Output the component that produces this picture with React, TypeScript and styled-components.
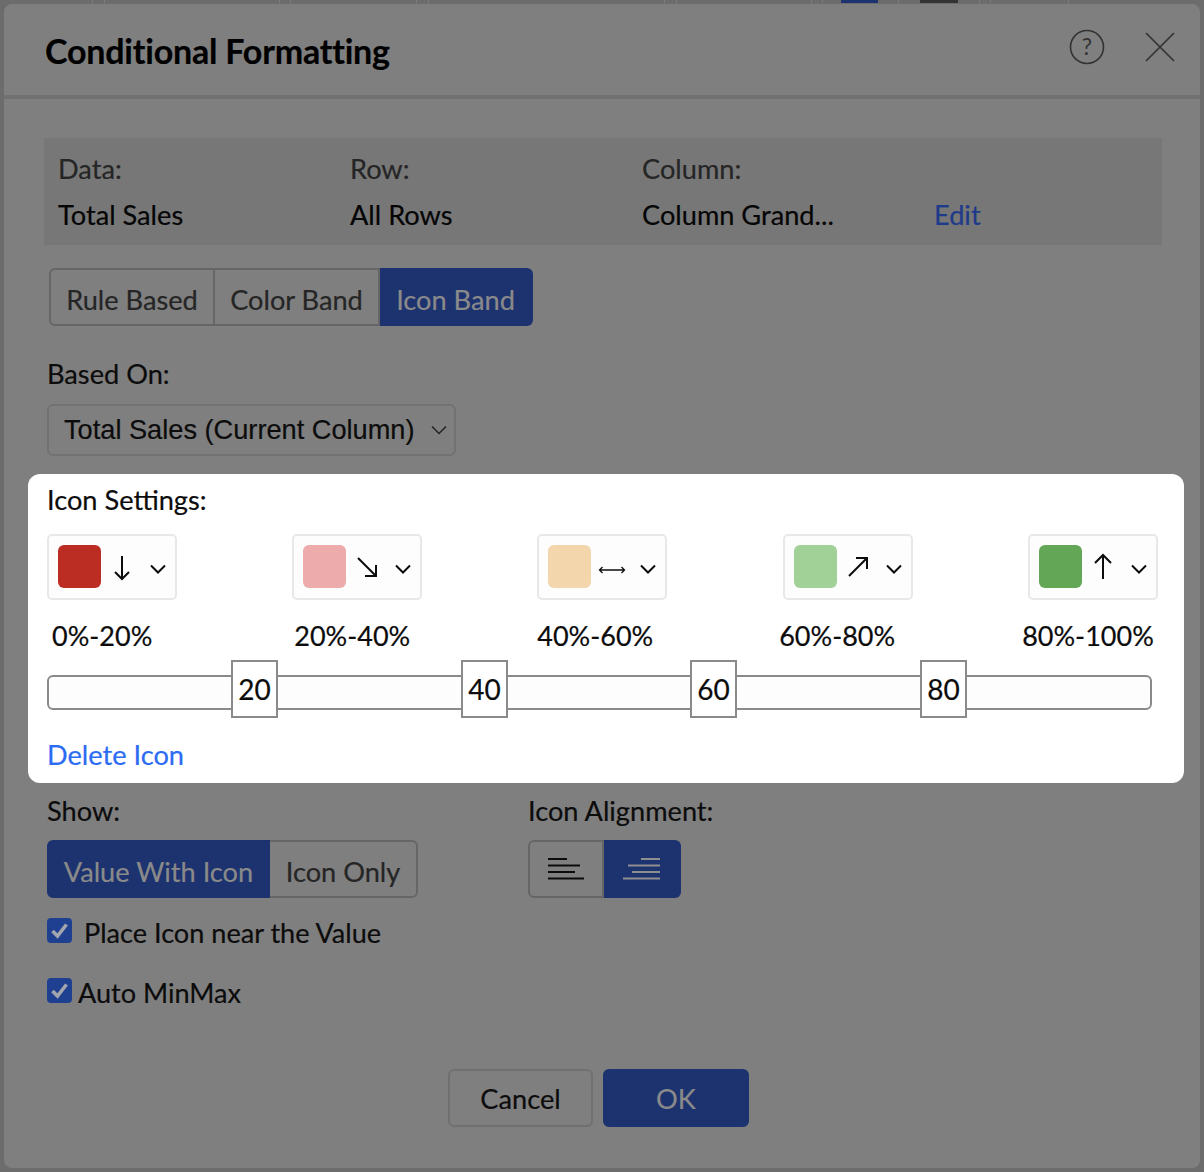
import styled, { createGlobalStyle } from 'styled-components'

const GlobalStyle = createGlobalStyle`
  html, body {
    margin: 0;
    padding: 0;
    background: #6c6c6c;
  }
  * {
    box-sizing: border-box;
  }
`

const BLUE = '#1d3370'
const LINE = '#666666'

const Page = styled.div`
  font-family: Lato, 'Liberation Sans', sans-serif;
  height: 1172px;
  overflow: hidden;
  position: relative;
  -webkit-text-stroke: 0.2px;
  width: 1204px;
`

const BackStrip = styled.div`
  background: #6c6c6c;
  display: flex;
  height: 4px;
`

const BackMark = styled.div<{ $x: number; $w: number; $color: string }>`
  background: ${p => p.$color};
  height: 3px;
  margin-left: ${p => p.$x}px;
  width: ${p => p.$w}px;
`

const Dialog = styled.div`
  background: #7f7f7f;
  border-radius: 8px;
  height: 1164px;
  margin: 0 4px;
`

const Header = styled.header`
  align-items: center;
  border-bottom: 4px solid #717171;
  display: flex;
  height: 95px;
  padding: 0 25px 0 41px;
`

const Title = styled.h1`
  color: #000;
  flex-grow: 1;
  font-size: 34px;
  font-weight: 700;
  letter-spacing: -0.2px;
  margin: 1px 0 0;
`

const HelpIcon = styled.svg`
  display: block;
  margin-top: -6px;
`

const CloseIcon = styled.svg`
  display: block;
  margin: -6px 0 0 40px;
`

const InfoPanel = styled.section`
  background: #777777;
  display: grid;
  grid-template-columns: repeat(4, 292px);
  grid-template-rows: 46px 46px;
  height: 107px;
  margin: 39px 38px 0 40px;
  padding: 7px 0 0 14px;
`

const InfoLabel = styled.div`
  align-items: center;
  color: #252525;
  display: flex;
  font-size: 27.2px;
`

const InfoValue = styled(InfoLabel)`
  color: #050505;
`

const EditLink = styled(InfoLabel)`
  color: #1e3a8a;
`

const Segments = styled.div<{ $left: number; $top: number }>`
  display: inline-flex;
  height: 58px;
  margin: ${p => p.$top}px 0 0 ${p => p.$left}px;
`

const Segment = styled.div<{ $active?: boolean; $width: number; $pos: 'first' | 'mid' | 'last' }>`
  align-items: center;
  background: ${p => (p.$active ? BLUE : 'transparent')};
  border: 2px solid ${p => (p.$active ? BLUE : LINE)};
  border-left-width: ${p => (p.$pos === 'first' ? 2 : 0)}px;
  border-radius: ${p => (p.$pos === 'first' ? '6px 0 0 6px' : p.$pos === 'last' ? '0 6px 6px 0' : '0')};
  color: ${p => (p.$active ? '#8a8a8a' : '#252525')};
  display: flex;
  font-size: 27.2px;
  justify-content: center;
  padding-top: 4px;
  width: ${p => p.$width}px;

  & + & {
    border-left: ${p => (p.$active ? 'none' : `2px solid ${LINE}`)};
  }
`

const IconSegment = styled(Segment)`
  padding-top: 0;
`

const FieldLabel = styled.div`
  color: #0c0c0c;
  font-size: 27.2px;
  line-height: 32px;
`

const BasedOn = styled.section`
  margin: 32px 0 0 43px;
`

const SelectBox = styled.div`
  align-items: center;
  border: 2px solid #727272;
  border-radius: 6px;
  color: #0c0c0c;
  display: flex;
  font-family: 'Liberation Sans', Arial, sans-serif;
  font-size: 27.2px;
  height: 52px;
  justify-content: space-between;
  margin-top: 14px;
  padding: 0 7px 0 15px;
  white-space: nowrap;
  width: 409px;
`

const Highlight = styled.section`
  background: #ffffff;
  border-radius: 12px;
  height: 309px;
  margin: 18px 0 0 24px;
  padding: 10px 27px 0 19px;
  width: 1156px;
`

const CardRow = styled.div`
  display: flex;
  gap: 115.2px;
  margin-top: 18px;
`

const Card = styled.div`
  align-items: center;
  background: #fdfdfd;
  border: 2px solid #e8e8e8;
  border-radius: 5px;
  display: flex;
  flex-shrink: 0;
  height: 66px;
  padding: 0 9px;
  width: 130px;
`

const Swatch = styled.div<{ $color: string }>`
  background: ${p => p.$color};
  border-radius: 6px;
  height: 43px;
  margin-top: -2px;
  width: 43px;
`

const ArrowIcon = styled.svg`
  display: block;
  margin-left: 7px;
`

const Chevron = styled.svg`
  display: block;
  margin: 3px 0 0 auto;
`

const RangeRow = styled.div`
  display: flex;
  margin-top: 20px;
  padding-left: 5px;
`

const RangeLabel = styled.div<{ $after: number }>`
  color: #0c0c0c;
  font-size: 27px;
  line-height: 32px;
  margin-right: ${p => p.$after}px;
`

const Track = styled.div`
  background: #fdfdfd;
  border: 2px solid #8a8a8a;
  border-radius: 6px;
  height: 35px;
  margin-top: 23px;
  position: relative;
  width: 1105px;
`

const Handle = styled.div<{ $at: number }>`
  align-items: center;
  background: #fff;
  border: 2px solid #8a8a8a;
  color: #0c0c0c;
  display: flex;
  font-size: 28px;
  height: 58px;
  justify-content: center;
  left: ${p => p.$at}px;
  position: absolute;
  top: -17px;
  width: 47px;
`

const DeleteLink = styled.div`
  color: #2b6cf3;
  font-size: 27.2px;
  line-height: 32px;
  margin-top: 29px;
`

const Lower = styled.section`
  display: grid;
  grid-template-columns: 481px 1fr;
  margin: 12px 0 0 43px;
`

const OptionRow = styled.div<{ $top: number; $gap: number }>`
  align-items: flex-start;
  color: #0c0c0c;
  display: flex;
  font-size: 27.1px;
  gap: ${p => p.$gap}px;
  line-height: 32px;
  margin-top: ${p => p.$top}px;
`

const CheckBox = styled.div`
  align-items: center;
  background: #1f4090;
  border-radius: 4px;
  display: flex;
  flex-shrink: 0;
  height: 25px;
  justify-content: center;
  margin-top: 1px;
  width: 25px;
`

const AlignIcon = styled.svg`
  display: block;
`

const Footer = styled.footer`
  display: flex;
  gap: 10px;
  margin-top: 60px;
  padding-left: 444px;
`

const FooterButton = styled.div<{ $primary?: boolean }>`
  align-items: center;
  background: ${p => (p.$primary ? BLUE : 'transparent')};
  border: 2px solid ${p => (p.$primary ? BLUE : '#707070')};
  border-radius: 6px;
  color: ${p => (p.$primary ? '#8a8a8a' : '#0c0c0c')};
  display: flex;
  font-size: 27.2px;
  height: 58px;
  justify-content: center;
  width: ${p => (p.$primary ? 146 : 145)}px;
`

const TICK = '#7b7b80'

const MARKS = [
  { x: 92, w: 1, color: TICK },
  { x: 11, w: 1, color: TICK },
  { x: 174, w: 1, color: TICK },
  { x: 10, w: 1, color: TICK },
  { x: 125, w: 1, color: TICK },
  { x: 11, w: 1, color: TICK },
  { x: 235, w: 1, color: TICK },
  { x: 11, w: 1, color: TICK },
  { x: 134, w: 1, color: TICK },
  { x: 10, w: 1, color: TICK },
  { x: 18, w: 37, color: '#1d3370' },
  { x: 20, w: 1, color: TICK },
  { x: 21, w: 38, color: '#333333' },
  { x: 21, w: 1, color: TICK },
  { x: 10, w: 1, color: TICK },
  { x: 77, w: 1, color: TICK },
]

const ARROWS = {
  down: <path d="M14 3V26M7 19L14 26L21 19" strokeWidth="2" />,
  se: <path d="M5 5L23 23M23 12V23H12" strokeWidth="2" />,
  both: <path d="M1.5 17H26.5M4.5 14L1.5 17L4.5 20M23.5 14L26.5 17L23.5 20" strokeWidth="1.3" />,
  ne: <path d="M5 23L23 5M12 5H23V16" strokeWidth="2" />,
  up: <path d="M14 26V2M6 10L14 2L22 10" strokeWidth="2" />,
}

const BANDS = [
  { color: '#bb2d22', arrow: ARROWS.down },
  { color: '#edabab', arrow: ARROWS.se },
  { color: '#f3d6ac', arrow: ARROWS.both },
  { color: '#a2d198', arrow: ARROWS.ne },
  { color: '#63a656', arrow: ARROWS.up },
]

const RANGES = [
  { text: '0%-20%', after: 142 },
  { text: '20%-40%', after: 127 },
  { text: '40%-60%', after: 126 },
  { text: '60%-80%', after: 127 },
  { text: '80%-100%', after: 0 },
]

const HANDLES = [
  { value: 20, at: 182 },
  { value: 40, at: 412 },
  { value: 60, at: 641 },
  { value: 80, at: 871 },
]

function Check() {
  return (
    <svg width="19" height="17" viewBox="0 0 19 17" fill="none">
      <path d="M2.5 9L7.5 14L16.5 2.5" stroke="#a2a5ad" strokeWidth="3.6" />
    </svg>
  )
}

export default function App() {
  return (
    <Page>
      <GlobalStyle />
      <BackStrip>
        {MARKS.map((m, i) => (
          <BackMark key={i} $x={m.x} $w={m.w} $color={m.color} />
        ))}
      </BackStrip>
      <Dialog>
        <Header>
          <Title>Conditional Formatting</Title>
          <HelpIcon width="36" height="36" viewBox="0 0 36 36" fill="none">
            <circle cx="18" cy="18" r="16.5" stroke="#333" strokeWidth="1.6" />
            <text x="18" y="26" textAnchor="middle" fontFamily="Lato, sans-serif" fontSize="23" fill="#333">
              ?
            </text>
          </HelpIcon>
          <CloseIcon width="30" height="30" viewBox="0 0 30 30" fill="none">
            <path d="M1 1L29 29M29 1L1 29" stroke="#333" strokeWidth="1.7" />
          </CloseIcon>
        </Header>

        <InfoPanel>
          <InfoLabel>Data:</InfoLabel>
          <InfoLabel>Row:</InfoLabel>
          <InfoLabel>Column:</InfoLabel>
          <span />
          <InfoValue>Total Sales</InfoValue>
          <InfoValue>All Rows</InfoValue>
          <InfoValue>Column Grand...</InfoValue>
          <EditLink>Edit</EditLink>
        </InfoPanel>

        <Segments $left={45} $top={23}>
          <Segment $pos="first" $width={166}>
            Rule Based
          </Segment>
          <Segment $pos="mid" $width={165}>
            Color Band
          </Segment>
          <Segment $pos="last" $width={153} $active>
            Icon Band
          </Segment>
        </Segments>

        <BasedOn>
          <FieldLabel>Based On:</FieldLabel>
          <SelectBox>
            Total Sales (Current Column)
            <svg width="16" height="10" viewBox="0 0 16 10" fill="none">
              <path d="M1 1.5L8 8.5L15 1.5" stroke="#222" strokeWidth="1.5" />
            </svg>
          </SelectBox>
        </BasedOn>

        <Highlight>
          <FieldLabel>Icon Settings:</FieldLabel>
          <CardRow>
            {BANDS.map((b, i) => (
              <Card key={i}>
                <Swatch $color={b.color} />
                <ArrowIcon width="28" height="28" viewBox="0 0 28 28" fill="none" stroke="#0c0c0c">
                  {b.arrow}
                </ArrowIcon>
                <Chevron width="16" height="10" viewBox="0 0 16 10" fill="none">
                  <path d="M1 1.5L8 8.5L15 1.5" stroke="#0c0c0c" strokeWidth="2" />
                </Chevron>
              </Card>
            ))}
          </CardRow>
          <RangeRow>
            {RANGES.map(r => (
              <RangeLabel key={r.text} $after={r.after}>
                {r.text}
              </RangeLabel>
            ))}
          </RangeRow>
          <Track>
            {HANDLES.map(h => (
              <Handle key={h.value} $at={h.at}>
                {h.value}
              </Handle>
            ))}
          </Track>
          <DeleteLink>Delete Icon</DeleteLink>
        </Highlight>

        <Lower>
          <div>
            <FieldLabel>Show:</FieldLabel>
            <Segments $left={0} $top={13}>
              <Segment $pos="first" $width={223} $active>
                Value With Icon
              </Segment>
              <Segment $pos="last" $width={148}>
                Icon Only
              </Segment>
            </Segments>
            <OptionRow $top={19} $gap={12}>
              <CheckBox>
                <Check />
              </CheckBox>
              Place Icon near the Value
            </OptionRow>
            <OptionRow $top={28} $gap={6}>
              <CheckBox>
                <Check />
              </CheckBox>
              Auto MinMax
            </OptionRow>
          </div>
          <div>
            <FieldLabel>Icon Alignment:</FieldLabel>
            <Segments $left={0} $top={13}>
              <IconSegment $pos="first" $width={76}>
                <AlignIcon width="37" height="22" viewBox="0 0 37 22" fill="none" stroke="#0c0c0c" strokeWidth="2">
                  <path d="M0 1H19M0 7.5H32M0 14H27M0 20.5H36" />
                </AlignIcon>
              </IconSegment>
              <IconSegment $pos="last" $width={77} $active>
                <AlignIcon width="37" height="22" viewBox="0 0 37 22" fill="none" stroke="#8f8f8f" strokeWidth="2">
                  <path d="M18 1H37M5 7.5H37M9 14H37M0 20.5H37" />
                </AlignIcon>
              </IconSegment>
            </Segments>
          </div>
        </Lower>

        <Footer>
          <FooterButton>Cancel</FooterButton>
          <FooterButton $primary>OK</FooterButton>
        </Footer>
      </Dialog>
    </Page>
  )
}
